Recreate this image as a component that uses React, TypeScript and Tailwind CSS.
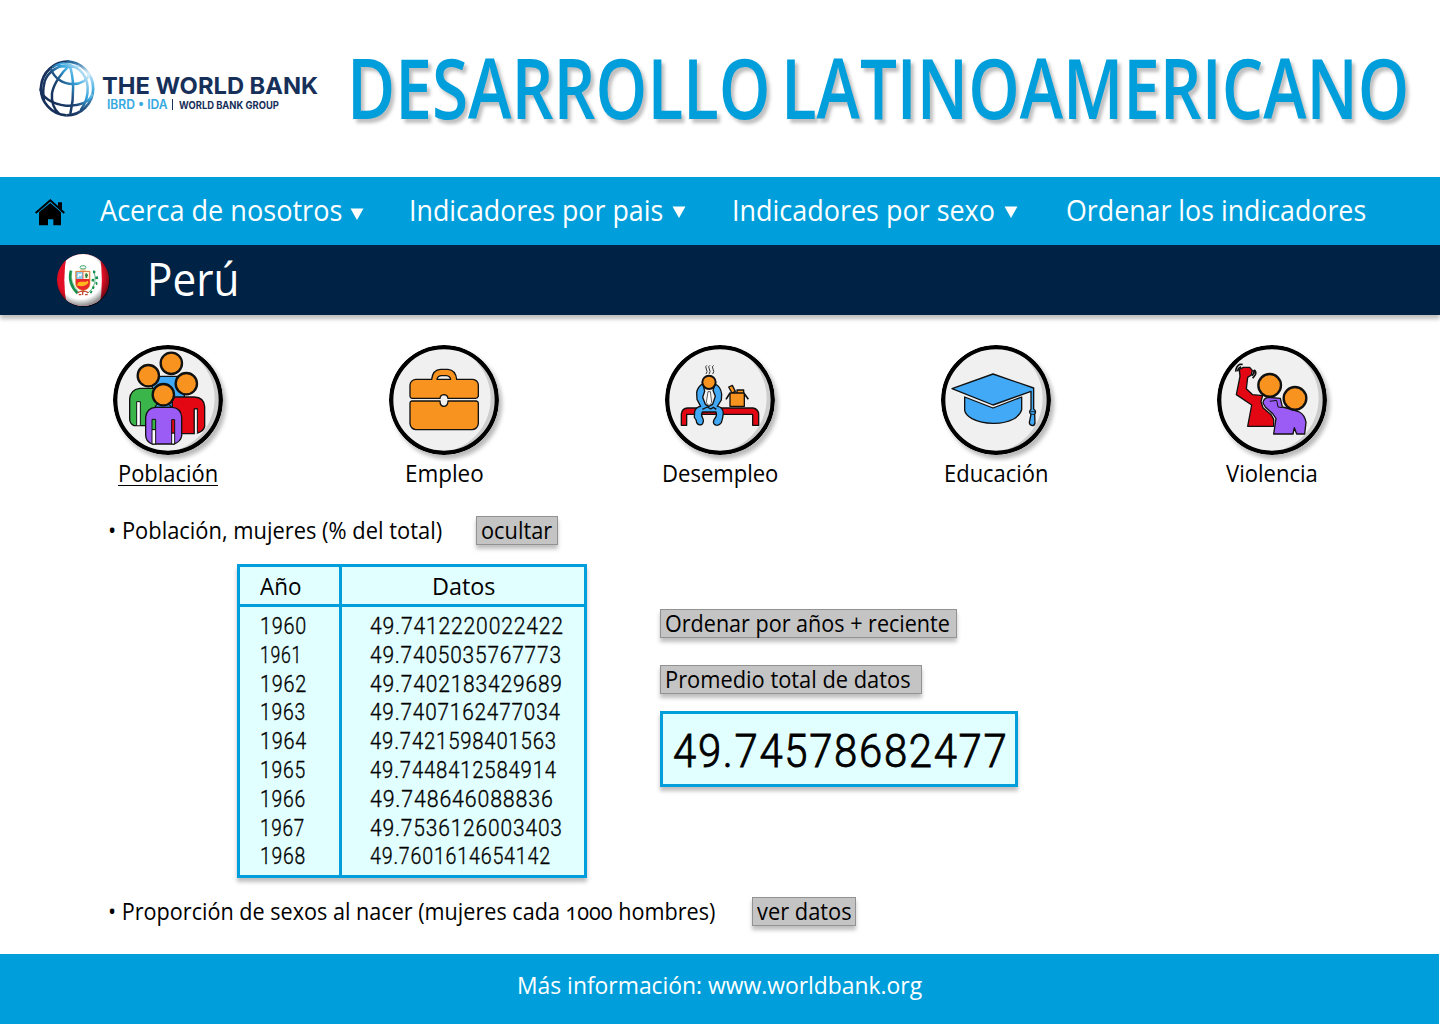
import { useLayoutEffect, useRef } from "react";
import type { ReactNode } from "react";

/* Single line of text condensed or stretched to the width of its box. */
function Fit({ className, children }: { className: string; children: ReactNode }) {
  const box = useRef<HTMLSpanElement>(null);
  const line = useRef<HTMLSpanElement>(null);
  useLayoutEffect(() => {
    if (box.current && line.current) {
      line.current.style.transform = `scaleX(${box.current.clientWidth / line.current.offsetWidth})`;
    }
  });
  return (
    <span ref={box} className={`block shrink-0 whitespace-nowrap ${className}`}>
      <span ref={line} className="inline-block origin-left">{children}</span>
    </span>
  );
}

function Globe() {
  return (
    <svg viewBox="56 58 171 171" className="size-[57px] shrink-0" fill="none">
      <defs>
        <linearGradient id="globe" gradientUnits="userSpaceOnUse" x1="95" y1="175" x2="200" y2="90">
          <stop offset="0" stopColor="#17305a" />
          <stop offset=".35" stopColor="#1d4675" />
          <stop offset=".65" stopColor="#35a4dd" />
          <stop offset="1" stopColor="#d8effb" />
        </linearGradient>
        <linearGradient id="rim" gradientUnits="userSpaceOnUse" x1="0" y1="62" x2="0" y2="226">
          <stop offset="0" stopColor="#1d6398" />
          <stop offset=".2" stopColor="#cfeaf9" />
          <stop offset=".5" stopColor="#4db3e6" />
          <stop offset="1" stopColor="#17305a" />
        </linearGradient>
      </defs>
      <path d="M150 63A80 80 0 1 0 141 224" stroke="#17305a" strokeWidth="8" />
      <path d="M141 63A80 80 0 0 1 141 224" stroke="url(#rim)" strokeWidth="8" />
      <g stroke="url(#globe)" strokeWidth="7.5">
        <path d="M94 82C103 112 130 130 160 130C184 130 204 119 211 99" />
        <path d="M63 144C66 169 98 191 140 195C180 198 212 184 219 160" />
        <path d="M151 74C128 94 103 128 98 158C95 184 105 208 119 219" />
        <path d="M151 74C163 108 166 165 153 220" />
        <path d="M151 74C180 80 202 103 205 138C207 167 198 190 184 209" />
        <path d="M151 74C116 73 86 93 76 122C71 142 70 160 74 179" />
        <path d="M113 71C125 80 164 82 179 76M99 81C118 67 139 64 157 75" strokeWidth="6" />
      </g>
    </svg>
  );
}

function Home() {
  return (
    <svg viewBox="105 86 90 81" className="h-[27px] w-[30px] shrink-0">
      <path d="M174 96h12v24l-12-11z" />
      <path d="M107 128L151 90L193 128" fill="none" stroke="#000" strokeWidth="6" />
      <path d="M117 126L151 98L183 126V165H160V147H144V165H117Z" />
    </svg>
  );
}

function Flag() {
  return (
    <svg viewBox="48 24 165 165" className="size-[55px] shrink-0">
      <defs>
        <clipPath id="disc"><circle cx="129" cy="105" r="78" /></clipPath>
        <radialGradient id="shade" cx=".45" cy=".43" r=".6">
          <stop offset=".72" stopColor="#000" stopOpacity="0" />
          <stop offset="1" stopColor="#000" stopOpacity=".55" />
        </radialGradient>
      </defs>
      <circle cx="131" cy="108" r="79" fill="#000" opacity=".55" />
      <g clipPath="url(#disc)">
        <path fill="#e20e25" d="M50 25h160v160H50z" />
        <path fill="#fff" d="M82 20H178Q193 105 178 190H82Q64 105 82 20Z" />
        <circle cx="129" cy="105" r="78" fill="url(#shade)" />
      </g>
      <g fill="none" stroke="#16904c">
        <path d="M93 77Q83 116 113 145" strokeWidth="8" />
        <path d="M94 80Q91 112 114 139" stroke="#68b578" strokeWidth="2" />
        <path d="M161 76Q176 119 143 145" strokeWidth="2" />
        <path d="M159 81l7 0M166 99l8-1M155 105l7 1M167 116l5-2M157 127l6 2M151 140l5 2" strokeWidth="8" />
        <ellipse cx="129" cy="67" rx="9" ry="5" strokeWidth="3" stroke="#3ea671" />
        <path d="M121 75h16" stroke="#d7a066" strokeWidth="3" />
      </g>
      <path d="M107 79H150V116Q150 132 129 137Q107 131 107 116Z" fill="#e9262b" stroke="#d6a026" strokeWidth="2" />
      <path d="M109 81H128V102H109Z" fill="#86cff4" />
      <path d="M130 81H148V102H130Z" fill="#faf7d8" />
      <path d="M114 96l3-8 5 3 3-5" fill="none" stroke="#fff" strokeWidth="4" />
      <path d="M135 91h9M139 85v14" stroke="#347f48" strokeWidth="5" />
      <path d="M112 122Q110 110 124 110Q135 112 144 107L145 114Q136 127 112 122Z" fill="#ffb51b" />
      <path d="M113 143Q129 134 145 143M116 149h8M135 149h8M128 140v10" fill="none" stroke="#c54a35" strokeWidth="4" />
    </svg>
  );
}

function Disc({ id, children }: { id: string; children: ReactNode }) {
  return (
    <svg viewBox="39 30 330 330" className="size-[110px] rounded-full shadow-[3px_4px_4px_rgba(0,0,0,0.28)]" strokeLinejoin="round">
      <defs><clipPath id={id}><circle cx="204" cy="195" r="155" /></clipPath></defs>
      <g clipPath={`url(#${id})`}>
        <path fill="#cdcdcd" d="M39 30h330v330H39z" />
        <circle cx="182" cy="190" r="162" fill="#f0f0f0" />
      </g>
      <circle cx="204" cy="195" r="158.5" fill="none" stroke="#000" strokeWidth="13" />
      {children}
    </svg>
  );
}

function Poblacion() {
  return (
    <Disc id="poblacion">
      <g stroke="#111" strokeWidth="4">
        <path fill="#41a9f5" d="M157 220V148Q160 125 184 124H232Q249 126 253 145V220Z" />
        <path fill="#3ab54a" d="M119 272H102Q89 266 89 252V192Q91 164 119 160H160Q190 164 190 193V272H119Z" />
        <path fill="#fff" strokeWidth="3" d="M110 271V200H121V271" />
        <path fill="#e30613" d="M217 296V186H283Q312 187 314 215V274Q311 289 292 294V222H283V296Z" />
        <path fill="#fff" strokeWidth="3" d="M283 295V222H292V293" />
        <path fill="#41a9f5" d="M165 217Q169 204 182 209L207 208L215 217Z" />
        <circle cx="214" cy="85" r="32" fill="#f7931e" strokeWidth="7" />
        <circle cx="145" cy="122" r="32" fill="#f7931e" strokeWidth="7" />
        <circle cx="259" cy="146" r="32" fill="#f7931e" strokeWidth="7" />
        <path fill="#9b5cf6" d="M167 327H156Q137 319 137 300V246Q141 218 167 217H217Q243 219 245 247V303Q242 320 222 327H167Z" />
        <path fill="#3ab54a" strokeWidth="3" d="M156 253H167V284H156Z" />
        <path fill="#fff" strokeWidth="3" d="M156 284H167V327H156ZM215 294H224V327H215Z" />
        <path fill="#e30613" strokeWidth="3" d="M215 254H224V294H215Z" />
        <circle cx="190" cy="179" r="32" fill="#f7931e" strokeWidth="7" />
      </g>
    </Disc>
  );
}

function Empleo() {
  return (
    <Disc id="empleo">
      <g fill="#f7931e" stroke="#111" strokeWidth="4">
        <path fillRule="evenodd" d="M119 133H167Q170 104 194 103H216Q239 105 242 133H291Q307 136 307 151V184Q305 190 299 190H216Q214 179 203 179Q193 180 192 190H108Q102 189 102 183V150Q104 135 119 133ZM183 133H224Q222 123 211 122H195Q184 124 183 133Z" />
        <path d="M107 198H192Q192 214 204 214Q216 213 216 198H301Q307 199 307 205V266Q305 282 289 284H119Q104 282 102 266V205Q102 199 107 198Z" />
      </g>
    </Disc>
  );
}

function Desempleo() {
  return (
    <Disc id="desempleo">
      <g stroke="#111" strokeWidth="4">
        <path fill="#e30613" d="M88 271V237Q90 220 107 219H303Q319 222 320 238V271H302V238H104V271Z" />
        <path fill="#f7931e" d="M234 174H277V214H234ZM230 156l11-5 9 18-10 5zM255 174v-9h20v9" />
        <path fill="none" d="M234 174l-12 19M277 176l12 17" strokeWidth="5" />
        <path fill="#41a9f5" d="M153 146Q137 155 134 173L135 193L146 214Q132 216 128 229L127 247Q135 256 134 263Q139 273 150 268Q157 260 152 249Q146 240 151 231H192Q197 241 186 254Q181 267 191 270Q200 274 208 263Q213 247 214 235Q213 216 196 214L208 195L209 177Q206 154 189 147L183 166L190 184L182 208L170 214L160 208L152 187L158 169Z" />
        <path fill="#fff" strokeWidth="2" d="M168 170L163 203L171 212L179 203L175 170Z" />
        <path fill="none" d="M151 223l15-7 10 6 8-5 9 6" />
        <circle cx="171" cy="142" r="20" fill="#f7931e" strokeWidth="6" />
        <path fill="none" strokeWidth="2.5" d="M165 91q-7 3-2 11t-1 15M174 91q-7 3-2 11t-1 15M185 91q-7 3-2 11t-1 15" />
      </g>
    </Disc>
  );
}

function Educacion() {
  return (
    <Disc id="educacion">
      <g fill="#41a9f5" stroke="#111" strokeWidth="4">
        <path d="M110 186L195 219L281 186V224Q277 240 257 252Q230 266 195 265Q158 265 132 251Q112 239 110 226Z" />
        <path d="M72 161L195 117L317 159V222Q326 227 320 238L321 264Q319 272 313 272Q304 271 304 262L309 238Q301 231 309 223V169L195 210Z" />
        <path fill="none" d="M307 230h14M309 238h11" strokeWidth="2.5" />
      </g>
    </Disc>
  );
}

function Violencia() {
  return (
    <Disc id="violencia">
      <g stroke="#111" strokeWidth="4">
        <path fill="#e30613" d="M106 103L118 97H137L145 106L142 120L131 127L127 161L146 179L176 182L171 200L177 218L202 240L209 253V274H131L143 210L97 179L108 124Z" />
        <path fill="#9b5cf6" d="M177 204Q178 190 192 187L229 190L235 216Q268 223 286 231Q302 239 306 262L302 297H278L271 278L267 297H209L216 251L207 237L184 216Z" />
        <path fill="none" d="M197 199L218 196L222 216L235 218" strokeWidth="3" />
        <path fill="none" strokeWidth="5" d="M95 110Q96 94 108 88L116 88M101 109Q102 99 111 95M150 105Q158 110 154 119L146 130M150 105L149 115L144 122" />
        <circle cx="197" cy="151" r="34" fill="#f7931e" strokeWidth="7" />
        <circle cx="273" cy="190" r="34" fill="#f7931e" strokeWidth="7" />
      </g>
    </Disc>
  );
}

function Caret({ className }: { className: string }) {
  return (
    <svg viewBox="0 0 14 12" className={`h-3 w-3.5 shrink-0 ${className}`}>
      <path d="M.5.5h13L7 12z" fill="#fff" />
    </svg>
  );
}

const categories = [
  { label: "Población", icon: <Poblacion />, width: "w-[100px]", line: "border-b-[1.5px] border-black" },
  { label: "Empleo", icon: <Empleo />, width: "w-[79px]", line: "" },
  { label: "Desempleo", icon: <Desempleo />, width: "w-[116px]", line: "" },
  { label: "Educación", icon: <Educacion />, width: "w-[105px]", line: "" },
  { label: "Violencia", icon: <Violencia />, width: "w-[92px]", line: "" },
];

const rows = [
  { year: "1960", yw: "w-[47px]", value: "49.7412220022422", vw: "w-[194px]" },
  { year: "1961", yw: "w-[42px]", value: "49.7405035767773", vw: "w-[192px]" },
  { year: "1962", yw: "w-[47px]", value: "49.7402183429689", vw: "w-[193px]" },
  { year: "1963", yw: "w-[46px]", value: "49.7407162477034", vw: "w-[191px]" },
  { year: "1964", yw: "w-[47px]", value: "49.7421598401563", vw: "w-[187px]" },
  { year: "1965", yw: "w-[46px]", value: "49.7448412584914", vw: "w-[187px]" },
  { year: "1966", yw: "w-[46px]", value: "49.748646088836", vw: "w-[184px]" },
  { year: "1967", yw: "w-[45px]", value: "49.7536126003403", vw: "w-[193px]" },
  { year: "1968", yw: "w-[46px]", value: "49.7601614654142", vw: "w-[181px]" },
];

function Button({ className, width, children }: { className: string; width: string; children: string }) {
  return (
    <button className={`flex h-[29px] items-center border border-[#929292] bg-[#c4c4c4] pb-px pl-[4px] leading-[26px] shadow-[0_4px_4px_rgba(0,0,0,0.25)] ${className}`}>
      <Fit className={width}>{children}</Fit>
    </button>
  );
}

export default function App() {
  return (
    <div className="flex h-[1024px] w-[1440px] flex-col overflow-hidden bg-white font-['Open_Sans',sans-serif] text-[23px] text-black">
      <header className="flex h-[177px] shrink-0 items-center">
        <div className="ml-[38px] flex w-[308px] items-center">
          <Globe />
          <div className="ml-[7px] mt-[7px] font-['Inter',sans-serif] text-[#17305a]">
            <Fit className="h-6 w-[216px] text-[23.5px] font-bold leading-[24px]">THE WORLD BANK</Fit>
            <div className="ml-[5px] flex h-[13px] items-center leading-[13px]">
              <Fit className="w-[61px] text-[12.5px] font-semibold text-[#35a8e0]">IBRD • IDA</Fit>
              <span className="ml-1 h-[11px] w-px bg-[#17305a]" />
              <Fit className="ml-1.5 mt-0.5 w-[100px] text-[10.5px] font-bold">WORLD BANK GROUP</Fit>
            </div>
          </div>
        </div>
        <h1 className="flex pb-[5px] text-[83px] font-semibold leading-none text-[#009fdb] [text-shadow:4px_4px_4px_rgba(0,0,0,0.25)]">
          <Fit className="ml-px w-[424px]">DESARROLLO</Fit>
          <Fit className="ml-[10px] w-[628px]">LATINOAMERICANO</Fit>
        </h1>
      </header>

      <nav className="flex h-[68px] shrink-0 items-center bg-[#009fdb] pb-[2px] pl-[35px] text-[29px] leading-none text-white">
        <div className="mt-1"><Home /></div>
        <Fit className="-mt-px ml-[35px] w-[242px]">Acerca de nosotros</Fit>
        <Caret className="ml-[8px] mt-2" />
        <Fit className="-mt-px ml-[45px] w-[254px]">Indicadores por pais</Fit>
        <Caret className="ml-[9px] mt-1" />
        <Fit className="-mt-px ml-[46px] w-[263px]">Indicadores por sexo</Fit>
        <Caret className="ml-[9px] mt-1" />
        <Fit className="-mt-px ml-[48px] w-[300px]">Ordenar los indicadores</Fit>
      </nav>

      <div className="relative flex h-[70px] shrink-0 items-center bg-[#002345] pl-[56px] text-white shadow-[0_4px_4px_rgba(0,0,0,0.25)]">
        <Flag />
        <Fit className="mb-[3px] ml-[36px] w-[92px] text-[45px] leading-[60px]">Perú</Fit>
      </div>

      <main className="h-[639px] shrink-0 pt-[30px]">
        <section className="flex px-[30px]">
          {categories.map((c) => (
            <div key={c.label} className="flex w-[276px] flex-col items-center">
              {c.icon}
              <Fit className={`mt-1 h-[27px] leading-[28px] ${c.width} ${c.line}`}>{c.label}</Fit>
            </div>
          ))}
        </section>

        <section className="mt-[30px] flex h-[29px] items-center pl-[108px] leading-[28px]">
          <Fit className="mb-px w-[334px]">• Población, mujeres (% del total)</Fit>
          <Button className="ml-[34px] w-[82px]" width="w-[71px]">ocultar</Button>
        </section>

        <section className="mt-[19px] flex">
          <div className="ml-[237px] grid h-[314px] w-[350px] grid-cols-[102px_1fr] grid-rows-[40px_1fr] border-[3px] border-[#009fdb] bg-[#e1ffff] shadow-[0_4px_4px_rgba(0,0,0,0.25)]">
            <div className="border-b-[3px] border-r-[3px] border-[#009fdb] pl-5 leading-[38px]">
              <Fit className="w-[42px]">Año</Fit>
            </div>
            <div className="flex justify-center border-b-[3px] border-[#009fdb] leading-[38px]">
              <Fit className="w-[63px]">Datos</Fit>
            </div>
            <div className="border-r-[3px] border-[#009fdb] pl-5 pt-[5px] font-['Roboto',sans-serif] text-[24px] font-light leading-[28.8px] tracking-[0.04em] [-webkit-text-stroke:0.35px_#000]">
              {rows.map((r) => <Fit key={r.year} className={`h-[28.8px] ${r.yw}`}>{r.year}</Fit>)}
            </div>
            <div className="pl-[28px] pt-[5px] font-['Roboto',sans-serif] text-[24px] font-light leading-[28.8px] tracking-[0.04em] [-webkit-text-stroke:0.35px_#000]">
              {rows.map((r) => <Fit key={r.year} className={`h-[28.8px] ${r.vw}`}>{r.value}</Fit>)}
            </div>
          </div>
          <div className="ml-[73px] pt-[45px]">
            <Button className="w-[297px]" width="w-[285px]">Ordenar por años + reciente</Button>
            <Button className="mt-[27px] w-[262px]" width="w-[246px]">Promedio total de datos</Button>
            <div className="mt-[17px] h-[76px] w-[358px] border-[3px] border-[#009fdb] bg-[#e1ffff] pl-2.5 pt-[2px] font-['Roboto',sans-serif] text-[47px] font-light leading-[70px] tracking-[0.04em] shadow-[0_4px_4px_rgba(0,0,0,0.25)] [-webkit-text-stroke:0.9px_#000]">
              <Fit className="w-[335px]">49.74578682477</Fit>
            </div>
          </div>
        </section>

        <section className="mt-[19px] flex h-[29px] items-center pl-[108px] leading-[28px]">
          <Fit className="mb-px w-[607px]">• Proporción de sexos al nacer (mujeres cada <span className="oldstyle-nums">1000</span> hombres)</Fit>
          <Button className="ml-[37px] w-[104px]" width="w-[95px]">ver datos</Button>
        </section>
      </main>

      <footer className="flex h-[70px] w-[1439px] shrink-0 justify-center bg-[#009fdb] pt-[17px] text-[24px] leading-[28px] text-white">
        <Fit className="w-[405px]">Más información: www.worldbank.org</Fit>
      </footer>
    </div>
  );
}
